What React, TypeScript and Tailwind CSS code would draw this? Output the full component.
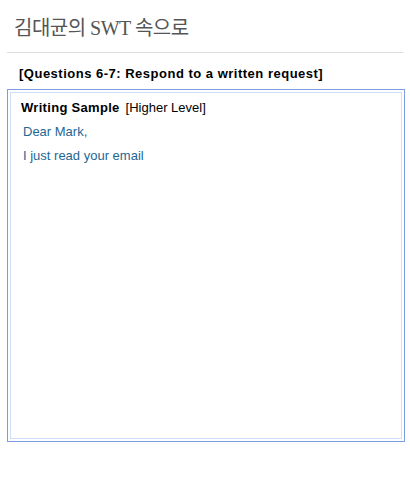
import React from "react";

export default function App() {
  return (
    <div className="w-[410px] h-[480px] bg-white" style={{ fontFamily: '"Liberation Sans", "Noto Sans CJK KR", sans-serif' }}>
      <div className="h-[52px] pl-[14px] pt-[16px]">
        <h1
          className="text-[20px] leading-[24px] text-[#555555] font-normal tracking-[-0.5px]"
          style={{ fontFamily: '"Liberation Serif", "Noto Sans CJK KR", serif' }}
        >
          김대균의 SWT 속으로
        </h1>
      </div>
      <div className="mx-[7px] h-px bg-[#dddddd]" />
      <div className="pl-[19px] pt-[13px] h-[36px]">
        <p className="text-[13px] leading-[16px] font-bold text-black tracking-[0.5px]">
          [Questions 6-7: Respond to a written request]
        </p>
      </div>
      <div className="ml-[7px] w-[398px] h-[353px] border border-[#7c9ce4] p-[2px]">
        <div className="h-full border border-[#cfdffa] pl-[10px] pt-[7px]">
          <p className="text-[13px] leading-[16px] text-black">
            <span className="font-bold tracking-[0.3px]">Writing Sample</span>
            <span className="ml-[6px]">[Higher Level]</span>
          </p>
          <div className="pl-[2px] pt-[4px] text-[13px] leading-[24px] text-[#1d6794]">
            <p>Dear Mark,</p>
            <p>I just read your email</p>
          </div>
        </div>
      </div>
    </div>
  );
}
